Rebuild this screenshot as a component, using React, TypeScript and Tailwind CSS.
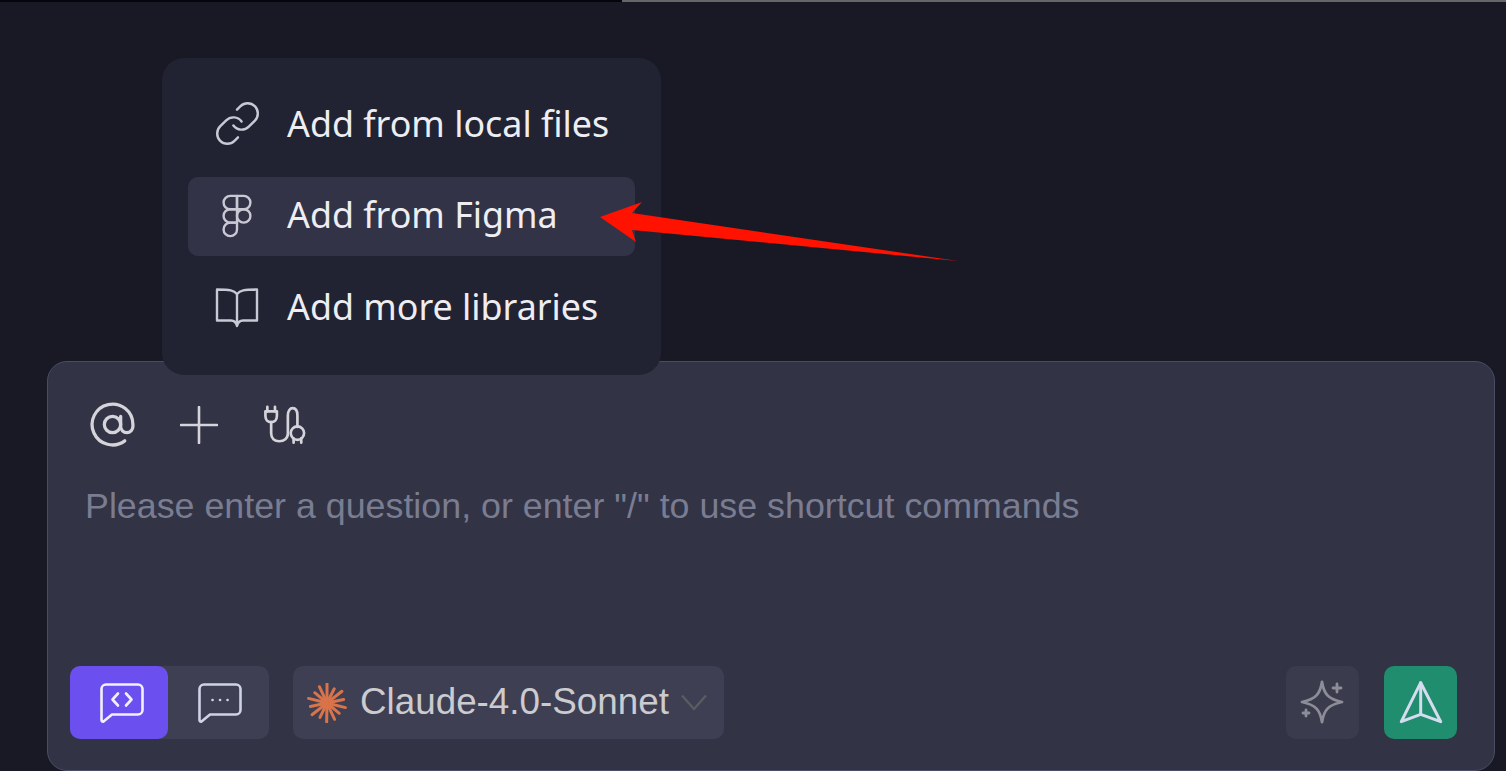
import { AtSign, Figma, Link } from "lucide-react";

const menuItems = [
  { label: "Add from local files", icon: <Link size={49} strokeWidth={1.2} className="shrink-0 -mx-[2.5px] -mt-0.5" /> },
  { label: "Add from Figma", icon: <Figma size={46} strokeWidth={1.25} className="shrink-0 -mx-1 -mt-[3px]" />, active: true },
  { label: "Add more libraries", icon: <BookIcon /> },
];

function BookIcon() {
  return (
    <svg width="44" height="40" viewBox="0 0 44 40" fill="none" stroke="currentColor" strokeWidth="2.4" strokeLinejoin="round" strokeLinecap="round" className="shrink-0">
      <path d="M22 6C19 2.5 15 1.5 2 1.5V32.5H16C19 32.5 21 33.5 22 38C23 33.5 25 32.5 28 32.5H42V1.5C29 1.5 25 2.5 22 6Z" />
      <path d="M22 6V37" />
    </svg>
  );
}

function PlugIcon() {
  return (
    <svg width="42" height="40" viewBox="0 0 44 40" fill="none" stroke="currentColor" strokeWidth="2.8" strokeLinecap="round" strokeLinejoin="round">
      <path d="M3.5 1V5.7M11.5 1V5.7" />
      <path d="M1.5 5.7H13.5V10.5C13.5 14.5 11 17 7.5 17C4 17 1.5 14.5 1.5 10.5Z" />
      <path d="M7.5 17V29C7.5 34 11 37 16 37C21 37 25 34 25 29V10C25 5 27.5 2.3 30 2.3C32.8 2.3 35 5 35 10V22" />
      <circle cx="35" cy="28.5" r="7" />
      <path d="M31 34V38.5M39 34V38.5" />
    </svg>
  );
}

function Bubble({ children }: { children: React.ReactNode }) {
  return (
    <svg width="44" height="40" viewBox="0 0 44 40" fill="none" stroke="currentColor" strokeWidth="2.6" strokeLinecap="round" strokeLinejoin="round">
      <path d="M6 1.5H38C40.5 1.5 42.5 3.5 42.5 6V27C42.5 29.5 40.5 31.5 38 31.5H12L3.5 38.5C2.5 39 1.5 38.5 1.5 37V6C1.5 3.5 3.5 1.5 6 1.5Z" />
      {children}
    </svg>
  );
}

function ClaudeMark() {
  const rays = [
    [0, 19], [27, 16], [52, 19], [78, 17], [104, 19], [130, 16], [155, 18], [181, 19],
    [206, 16], [232, 19], [258, 17], [284, 19], [310, 16], [335, 18],
  ];
  return (
    <svg width="40" height="40" viewBox="0 0 40 40" stroke="#d9734a" strokeWidth="3" strokeLinecap="round" className="shrink-0">
      {rays.map(([deg, len]) => (
        <line key={deg} x1="20" y1="20" x2="20" y2={20 - len} transform={`rotate(${deg} 20 20)`} />
      ))}
    </svg>
  );
}

export default function App() {
  return (
    <div className="relative flex h-[771px] w-full flex-col overflow-hidden bg-[#181924] font-['Liberation_Sans',sans-serif]">
      <div className="flex h-0.5 shrink-0">
        <div className="w-[622px] bg-[#05060d]" />
        <div className="flex-1 bg-[#666666]" />
      </div>

      {/* chat box */}
      <div className="mt-auto ml-[47px] mr-[11px] flex h-[410px] flex-col rounded-[20px] border border-[#4a4c66] bg-[#323344] pt-[38px] pb-[31px] pl-[22px] pr-[37px]">
        <div className="flex items-center gap-[46px] pl-5 text-[#d4d4da]">
          <AtSign size={49} strokeWidth={1.6} className="-mx-[2.5px] shrink-0" />
          <svg width="38" height="38" viewBox="0 0 38 38" stroke="currentColor" strokeWidth="2.6" strokeLinecap="round">
            <path d="M19 1V37M1 19H37" />
          </svg>
          <PlugIcon />
        </div>

        <div className="mt-[37px] pl-[15px] text-[35.8px] leading-[40px] text-[#7a7d92]">
          {'Please enter a question, or enter "/" to use shortcut commands'}
        </div>

        <div className="mt-auto flex items-center">
          <div className="flex h-[73px] w-[199px] rounded-[10px] bg-[#3e3f52]">
            <div className="flex w-[98px] items-center justify-center rounded-[10px] bg-[#6b50ef] pl-1.5 text-[#f1f0ff]">
              <Bubble>
                <path d="M18 10.5L12.5 16.5L18 22.5M26 10.5L31.5 16.5L26 22.5" />
              </Bubble>
            </div>
            <div className="flex flex-1 items-center justify-center pl-0.5 text-[#cfd3e8]">
              <Bubble>
                <path d="M14.5 17H14.6M22 17H22.1M29.5 17H29.6" />
              </Bubble>
            </div>
          </div>

          <div className="ml-6 flex h-[73px] w-[431px] items-center rounded-[10px] bg-[#3e3f52] pl-3.5">
            <ClaudeMark />
            <span className="ml-[13px] text-[36.8px] leading-none text-[#cbcbd0]">Claude-4.0-Sonnet</span>
            <svg width="26" height="17" viewBox="0 0 26 17" fill="none" stroke="#5a5b63" strokeWidth="2.4" className="ml-3 shrink-0">
              <path d="M1 1.5L13 15L25 1.5" />
            </svg>
          </div>

          <div className="ml-auto flex size-[73px] items-center justify-center rounded-[10px] bg-[#3a3b4d] text-[#8d8d98]">
            <svg width="73" height="73" viewBox="0 0 73 73" fill="none" stroke="currentColor" strokeWidth="2.8" strokeLinecap="round" strokeLinejoin="round">
              <path d="M36 16C38 28 42 33 56 36C42 39 38 44 36 56C34 44 30 39 16 36C30 33 34 28 36 16Z" />
              <path d="M51 18V26M47 22H55M20 44V50M17 47H23" />
            </svg>
          </div>
          <div className="ml-[25px] flex size-[73px] items-center justify-center rounded-[10px] bg-[#1f8d6e] text-[#d5dcef]">
            <svg width="73" height="73" viewBox="0 0 73 73" fill="none" stroke="currentColor" strokeWidth="3" strokeLinecap="round" strokeLinejoin="round">
              <path d="M36.7 16.7L17.3 55.7L36.7 48.3L56.7 55.7Z" />
              <path d="M36.7 16.7V48.3" />
            </svg>
          </div>
        </div>
      </div>

      {/* popup menu */}
      <div className="absolute left-[162px] top-[58px] flex h-[317px] w-[499px] flex-col gap-[12.5px] rounded-[22px] bg-[#212333] px-[26px] pt-[27px] font-['Noto_Sans',sans-serif]">
        {menuItems.map((item) => (
          <div
            key={item.label}
            className={`flex h-[79px] shrink-0 items-center gap-7 rounded-[10px] pl-[27px] text-[35.85px] text-[#eeeef2] ${item.active ? "bg-[#323346]" : ""}`}
          >
            <span className="flex w-11 justify-center text-[#c8c9d4]">{item.icon}</span>
            <span className="pb-0.5">{item.label}</span>
          </div>
        ))}
      </div>

      {/* annotation arrow */}
      <svg className="absolute left-[595px] top-[198px]" width="370" height="68" viewBox="595 198 370 68">
        <path d="M600 217L642 202L632 213L958 261L632 230L636 242Z" fill="#ff1200" />
      </svg>
    </div>
  );
}
